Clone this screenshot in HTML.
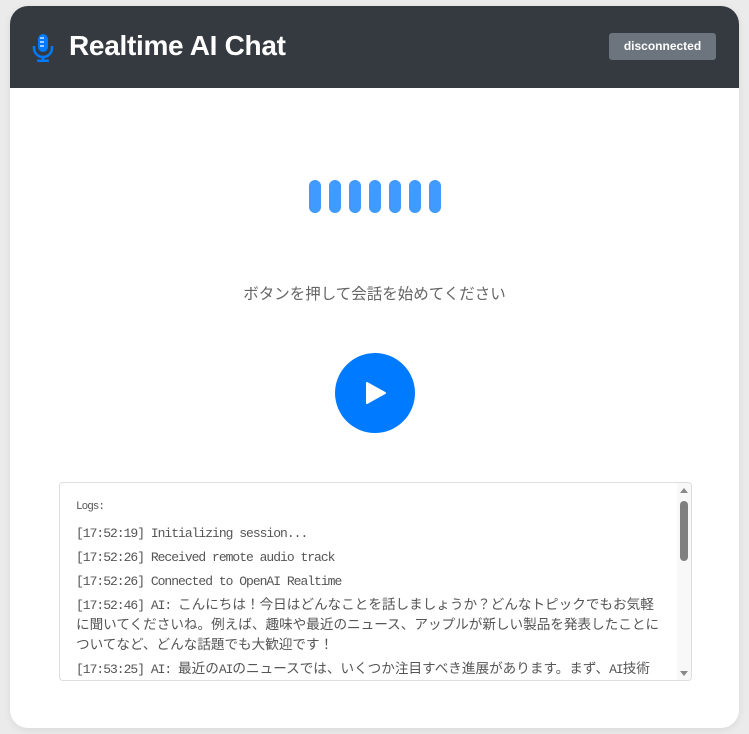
<!DOCTYPE html>
<html><head><meta charset="utf-8"><style>
*{box-sizing:border-box;margin:0;padding:0}
body{width:749px;height:734px;background:#ebebeb;font-family:"Liberation Sans","Noto Sans CJK JP",sans-serif;position:relative;overflow:hidden}
.card{position:absolute;left:10px;top:6px;width:729px;height:722px;background:#fff;border-radius:18px;overflow:hidden;box-shadow:0 2px 8px rgba(0,0,0,.08)}
.hdr{height:82px;background:#343a40;position:relative}
.title{position:absolute;left:59px;top:24px;color:#fff;font-size:28px;font-weight:bold;letter-spacing:-0.3px}
.mic{position:absolute;left:22px;top:28px}
.badge{position:absolute;left:599px;top:27px;width:107px;height:27px;background:#6c757d;border-radius:3px;color:#fff;font-size:12px;font-weight:bold;text-align:center;line-height:27px}
.bar{position:absolute;top:174px;width:12px;height:33px;border-radius:6px;background:#3f9bff}
.msg{position:absolute;left:0;width:729px;top:276px;text-align:center;color:#666;font-size:15.5px}
.play{position:absolute;left:325px;top:347px;width:80px;height:80px;border-radius:50%;background:#007bff}
.logs{position:absolute;left:49px;top:476px;width:633px;height:199px;border:1px solid #ddd;border-radius:4px;overflow:hidden;font-family:"Liberation Mono","Noto Sans CJK JP",monospace;color:#555;font-size:13.6px}
.in{position:absolute;left:16px;top:14px;width:640px}
.in p{margin-bottom:4px;line-height:20px;height:auto;white-space:nowrap}
.in p.s{height:20px}
.l{font-size:13px;letter-spacing:-1px;line-height:1}
.sb{position:absolute;right:0;top:0;width:14px;height:100%;background:#f8f8f8}
.th{position:absolute;left:3px;top:18px;width:8px;height:60px;border-radius:4px;background:#808080}
</style></head><body>
<div class="card">
<div class="hdr">
<svg class="mic" width="22" height="28" viewBox="0 0 22 28"><rect x="6" y="0" width="10" height="18" rx="5" fill="#007bff"/><path d="M2 12v2a9 9 0 0 0 18 0v-2" stroke="#007bff" stroke-width="2.5" fill="none"/><rect x="9.8" y="22" width="2.4" height="4" fill="#007bff"/><rect x="5" y="25.5" width="12" height="2.5" rx="1" fill="#007bff"/><path d="M8 4h4M8 8h4M8 12h4" stroke="#fff" stroke-width="1.2"/></svg>
<div class="title">Realtime AI Chat</div>
<div class="badge">disconnected</div>
</div>
<div class="bar" style="left:299px"></div><div class="bar" style="left:319px"></div><div class="bar" style="left:339px"></div><div class="bar" style="left:359px"></div><div class="bar" style="left:379px"></div><div class="bar" style="left:399px"></div><div class="bar" style="left:419px"></div>
<div class="msg">ボタンを押して会話を始めてください</div>
<div class="play"><svg width="80" height="80"><path d="M32 30 L50 40 L32 50 Z" fill="#fff" stroke="#fff" stroke-width="2" stroke-linejoin="round"/></svg></div>
<div class="logs">
<div class="in">
<p class="l s" style="font-size:11px;margin-bottom:8px;line-height:20px">Logs:</p>
<p class="s"><span class="l">[17:52:19] Initializing session...</span></p>
<p class="s"><span class="l">[17:52:26] Received remote audio track</span></p>
<p class="s"><span class="l">[17:52:26] Connected to OpenAI Realtime</span></p>
<p><span class="l">[17:52:46] AI: </span>こんにちは！今日はどんなことを話しましょうか？どんなトピックでもお気軽<br>に聞いてくださいね。例えば、趣味や最近のニュース、アップルが新しい製品を発表したことに<br>ついてなど、どんな話題でも大歓迎です！</p>
<p><span class="l">[17:53:25] AI: </span>最近の<span class="l">AI</span>のニュースでは、いくつか注目すべき進展があります。まず、<span class="l">AI</span>技術</p>
</div>
<div class="sb"><svg width="14" height="199" style="position:absolute;left:0;top:0"><path d="M3 10 L7 5 L11 10Z" fill="#888"/><path d="M3 188 L7 193 L11 188Z" fill="#888"/></svg><div class="th"></div></div>
</div>
</div>
</body></html>
